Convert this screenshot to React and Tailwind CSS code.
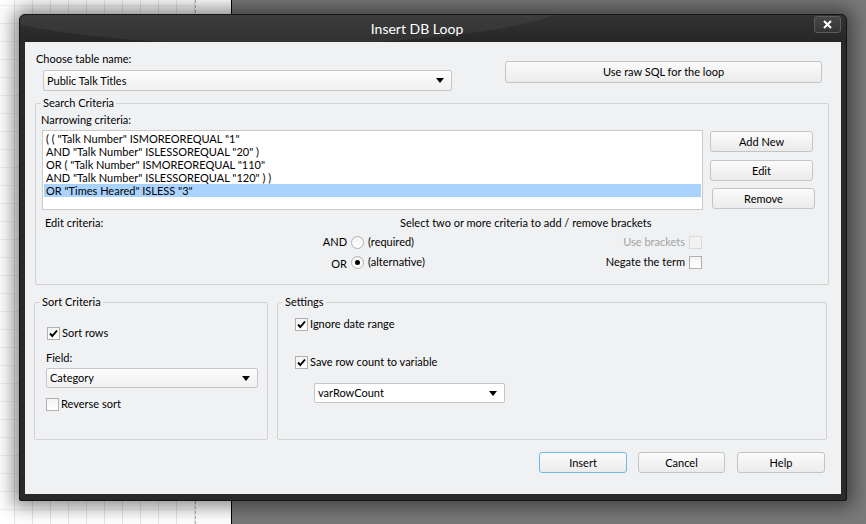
import React from 'react';

const ui = "font-['Lato','Liberation_Sans',sans-serif] text-[11px] leading-[14px] text-black";

const Button = ({ children, className = '', focused = false }) => (
  <div
    className={`flex items-center justify-center h-[21px] rounded-[3px] border bg-[linear-gradient(to_bottom,#fbfbfb,#ebebeb)] ${
      focused ? 'border-[#72b9e8]' : 'border-[#c4c4c4]'
    } ${className}`}
  >
    {children}
  </div>
);

const Arrow = () => (
  <svg width="8" height="5" viewBox="0 0 8 5">
    <path d="M0 0h8L4 5z" fill="#000" />
  </svg>
);

const Combo = ({ value, className = '', white = false }) => (
  <div
    className={`flex items-center justify-between pl-[3px] pr-[7px] rounded-[2px] border border-[#c6c6c6] ${
      white ? 'bg-white' : 'bg-[linear-gradient(to_bottom,#fdfdfd,#f0f0f0)]'
    } ${className}`}
  >
    <span>{value}</span>
    <Arrow />
  </div>
);

const Check = ({ checked = false, disabled = false }) => (
  <span
    className={`flex items-center justify-center w-[13px] h-[13px] shrink-0 border ${
      disabled ? 'border-[#d9d9d9] bg-[#f2f2f2]' : 'border-[#b0b0b0] bg-[linear-gradient(to_bottom,#f3f3f3,#ffffff)]'
    }`}
  >
    {checked && (
      <svg width="11" height="11" viewBox="0 0 11 11">
        <path d="M2 5.5 L4.3 8 L9 2.5" fill="none" stroke="#000" strokeWidth="1.9" />
      </svg>
    )}
  </span>
);

const Radio = ({ checked = false }) => (
  <span className="flex items-center justify-center w-[13px] h-[13px] shrink-0 rounded-full border border-[#b0b0b0] bg-[linear-gradient(to_bottom,#f2f2f2,#ffffff)]">
    {checked && <span className="w-[5px] h-[5px] rounded-full bg-black" />}
  </span>
);

const Group = ({ title, className = '', children }) => (
  <fieldset className={`border border-[#d3d3d3] rounded-[2px] p-0 ${className}`}>
    <legend className="ml-[5px] px-[2px]">{title}</legend>
    {children}
  </fieldset>
);

const criteria = [
  '( ( "Talk Number" ISMOREOREQUAL "1"',
  'AND "Talk Number" ISLESSOREQUAL "20" )',
  'OR ( "Talk Number" ISMOREOREQUAL "110"',
  'AND "Talk Number" ISLESSOREQUAL "120" ) )',
  'OR "Times Heared" ISLESS "3"',
];

const App = () => {
  return (
    <div className={`relative w-[866px] h-[524px] overflow-hidden flex ${ui}`}>
      {/* desktop behind the dialog */}
      <div className="w-[231px] h-full bg-white flex">
        <div className="w-[196px] h-full border-r border-dashed border-[#b4b4b4] bg-[linear-gradient(to_right,#e6e6e6_1px,transparent_1px),linear-gradient(to_bottom,#f0f0f0_1px,transparent_1px)] bg-[size:18px_18px] bg-[position:14px_5px]" />
      </div>
      <div className="w-[1px] h-full bg-black" />
      <div className="flex-1 h-full bg-[#797979]" />

      {/* dialog window */}
      <div className="absolute left-[19px] top-[14px] w-[828px] h-[487px] flex flex-col rounded-t-[6px] rounded-b-[2px] border border-[#141414] bg-[#2a2a2a] px-[5px] pb-[6px] shadow-[0_0_18px_6px_rgba(0,0,0,0.45)]">
        <div className="relative h-[27px] -mx-[5px] flex items-center justify-center pr-[32px] overflow-hidden rounded-t-[6px] bg-[linear-gradient(to_bottom,#333333,#262626)]">
          <div className="absolute -top-[70px] -left-[60px] w-[620px] h-[100px] rounded-[50%] bg-white/[0.05]" />
          <span className="relative text-white text-[14px] leading-[18px]">Insert DB Loop</span>
          <div className="absolute right-[5px] top-[1px] w-[27px] h-[17px] flex items-center justify-center rounded-[3px] border border-[#5c5c5c] bg-[linear-gradient(to_bottom,#474747,#353535)]">
            <svg width="9" height="9" viewBox="0 0 9 9">
              <path d="M1 1L8 8M8 1L1 8" stroke="#fff" strokeWidth="2" />
            </svg>
          </div>
        </div>

        {/* client area */}
        <div className="flex-1 bg-[#f0f1f3] flex flex-col pt-[10px]">
          <div className="flex items-start">
            <div className="ml-[11px] w-[416px] flex flex-col">
              <span>Choose table name:</span>
              <Combo value="Public Talk Titles" className="mt-[4px] ml-[7px] w-[409px] h-[21px]" />
            </div>
            <Button className="ml-[53px] mt-[9px] w-[317px] h-[22px]">Use raw SQL for the loop</Button>
          </div>

          <Group title="Search Criteria" className="ml-[10px] mt-[5px] w-[794px]">
            <div className="pl-[5px] pb-[12px] flex flex-col">
              <span className="mt-[3px]">Narrowing criteria:</span>
              <div className="flex items-start mt-[3px]">
                <div className="ml-[1px] w-[661px] h-[80px] border border-[#c9c9c9] bg-white p-[1px]">
                  {criteria.map((line, i) => (
                    <div
                      key={i}
                      className={`h-[13px] leading-[13px] pl-[2px] whitespace-pre ${i === 4 ? 'bg-[#a9d2fd]' : ''}`}
                    >
                      {line}
                    </div>
                  ))}
                </div>
                <div className="ml-[7px] mt-[1px] flex flex-col">
                  <Button className="w-[103px]">Add New</Button>
                  <Button className="w-[103px] mt-[8px]">Edit</Button>
                  <Button className="w-[103px] mt-[7px] ml-[2px]">Remove</Button>
                </div>
              </div>

              <div className="w-[661px] flex mt-[6px]">
                <span className="ml-[4px] w-[355px]">Edit criteria:</span>
                <span>Select two or more criteria to add / remove brackets</span>
              </div>
              <div className="w-[661px] h-[20px] mt-[2px] flex items-center">
                <span className="w-[306px] text-right">AND</span>
                <span className="ml-[4px]"><Radio /></span>
                <span className="ml-[4px]">(required)</span>
                <span className="ml-auto text-[#a3a3a3]">Use brackets</span>
                <span className="ml-[4px]"><Check disabled /></span>
              </div>
              <div className="w-[661px] h-[20px] flex items-center">
                <span className="w-[306px] text-right mt-[3px]">OR</span>
                <span className="ml-[4px]"><Radio checked /></span>
                <span className="ml-[4px]">(alternative)</span>
                <span className="ml-auto">Negate the term</span>
                <span className="ml-[4px]"><Check /></span>
              </div>
            </div>
          </Group>

          <div className="flex mt-[10px]">
            <Group title="Sort Criteria" className="ml-[9px] w-[234px] h-[145px]">
              <div className="pl-[12px] flex flex-col">
                <div className="mt-[17px] h-[14px] flex items-center gap-[2px]">
                  <Check checked />
                  <span>Sort rows</span>
                </div>
                <span className="mt-[11px] -ml-[1px]">Field:</span>
                <Combo value="Category" className="mt-[3px] -ml-[1px] w-[212px] h-[20px]" />
                <div className="mt-[9px] -ml-[1px] h-[14px] flex items-center gap-[2px]">
                  <Check />
                  <span>Reverse sort</span>
                </div>
              </div>
            </Group>

            <Group title="Settings" className="ml-[9px] w-[550px] h-[145px]">
              <div className="pl-[17px] flex flex-col">
                <div className="mt-[8px] h-[14px] flex items-center gap-[2px]">
                  <Check checked />
                  <span>Ignore date range</span>
                </div>
                <div className="mt-[24px] h-[14px] flex items-center gap-[2px]">
                  <Check checked />
                  <span>Save row count to variable</span>
                </div>
                <Combo value="varRowCount" white className="mt-[14px] ml-[19px] w-[191px] h-[20px]" />
              </div>
            </Group>
          </div>

          <div className="flex mt-[12px]">
            <Button focused className="ml-[514px] w-[88px]">Insert</Button>
            <Button className="ml-[11px] w-[87px]">Cancel</Button>
            <Button className="ml-[12px] w-[88px]">Help</Button>
          </div>
        </div>
      </div>
    </div>
  );
};

export default App;
